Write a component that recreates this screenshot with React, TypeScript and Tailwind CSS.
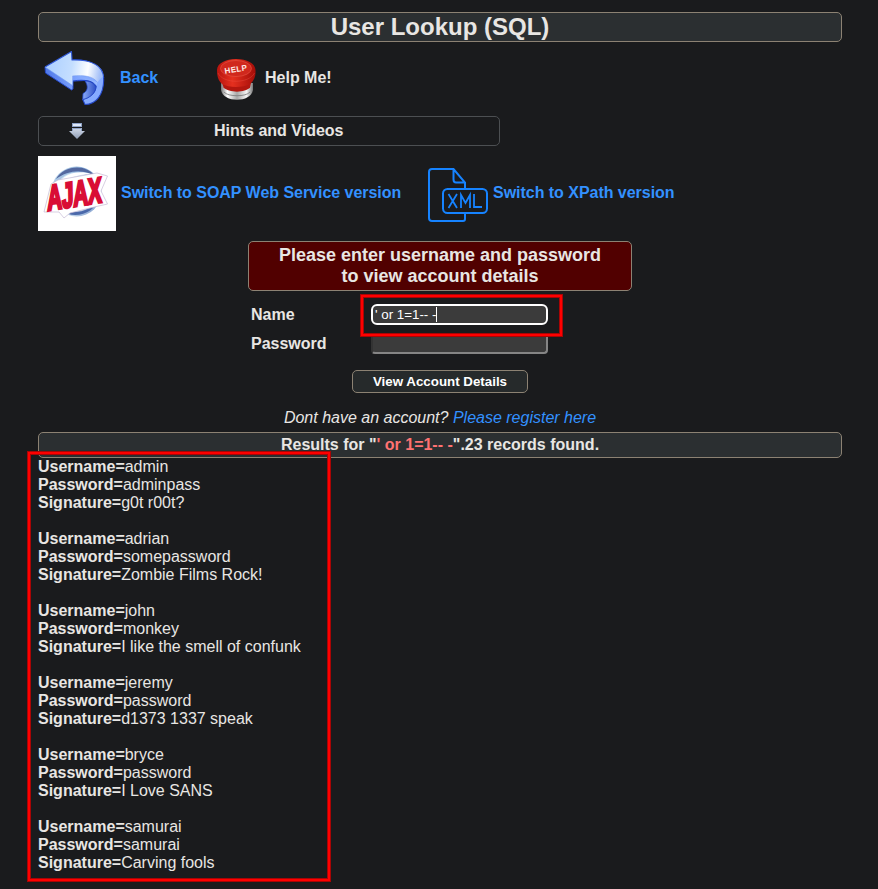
const records = [
  ["admin", "adminpass", "g0t r00t?"],
  ["adrian", "somepassword", "Zombie Films Rock!"],
  ["john", "monkey", "I like the smell of confunk"],
  ["jeremy", "password", "d1373 1337 speak"],
  ["bryce", "password", "I Love SANS"],
  ["samurai", "samurai", "Carving fools"],
];

function BackIcon() {
  return (
    <svg width="62" height="56" viewBox="44 51 62 56" className="shrink-0">
      <defs>
        <linearGradient id="face" x1="0" x2="1" y1="0" y2="0.1">
          <stop offset="0" stopColor="#a9cdff" />
          <stop offset="0.5" stopColor="#c4deff" />
          <stop offset="0.78" stopColor="#fdfeff" />
          <stop offset="1" stopColor="#a3bff8" />
        </linearGradient>
        <linearGradient id="side" x1="0" x2="1" y1="0" y2="0">
          <stop offset="0" stopColor="#4f78e8" />
          <stop offset="0.6" stopColor="#7ea4ff" />
          <stop offset="1" stopColor="#9bbcff" />
        </linearGradient>
        <linearGradient id="inner" x1="0" x2="1" y1="0" y2="0">
          <stop offset="0" stopColor="#8aabf8" />
          <stop offset="1" stopColor="#2f50c4" />
        </linearGradient>
      </defs>
      <path d="M72 60 C92 59 104 68 103.700 80 C103.500 95 96 104.500 85 104.500 L82.700 99.500 C90 98 96 92 96 86 C94 79 84 80 73 81Z" fill="#86abff" stroke="#2448c8" strokeWidth="1.1" />
      <path d="M83 93.500 C88 91 88.500 86 85 81 C91 80.500 96 83 96 87 C95.500 93 90 98 82.700 99.500Z" fill="url(#inner)" stroke="#2448c8" strokeWidth=".8" />
      <path d="M45 67 L45.500 73 L71.500 90 L73 89 L73 81 L84 80 C90 80 94 82 96.500 86 L97.500 82 L73 75Z" fill="url(#side)" />
      <path d="M45 67 L45.500 73 L71.500 90 L73 89 V81 C85 79 93 81 96 87" fill="none" stroke="#2448c8" strokeLinejoin="round" />
      <path d="M45 67 L71.500 51.500 L72 60 C92 59.500 103 66 103.500 76 C101 78 99 80 97.500 82.500 C93 76 84 75 73 76 L72.500 85.500Z" fill="url(#face)" />
      <path d="M45 67 L71.500 51.500 L72 60 C92 59.500 103 66 103.700 78" fill="none" stroke="#2f58d8" strokeWidth="1.1" strokeLinejoin="round" />
      <path d="M45 67 L72.500 85.500 V76 C84 75 93 76 97.500 82.500" fill="none" stroke="#6f97f0" strokeWidth=".6" />
    </svg>
  );
}

function HelpIcon() {
  return (
    <svg width="42" height="44" viewBox="216 58 42 44" className="shrink-0">
      <defs>
        <linearGradient id="chrome">
          <stop offset="0" stopColor="#777" />
          <stop offset=".2" stopColor="#fff" />
          <stop offset=".5" stopColor="#a8a8a8" />
          <stop offset=".8" stopColor="#f6f6f6" />
          <stop offset="1" stopColor="#777" />
        </linearGradient>
        <linearGradient id="red">
          <stop offset="0" stopColor="#b5140e" />
          <stop offset=".4" stopColor="#e5301f" />
          <stop offset="1" stopColor="#a50d08" />
        </linearGradient>
      </defs>
      <path d="M221 84 V91 C223 104 251 104 253 91 V84Z" fill="url(#chrome)" />
      <path d="M224 93 C228 98 246 98 250 93" fill="none" stroke="#777" strokeWidth=".8" />
      <path d="M221 80 L223.500 88.500 C229 94 245 94 250 88.500 L252 80Z" fill="#b3170f" />
      <path d="M217 71 C217 64 226 60 236 60 C247 60 255 64 255.500 71 C256 77 254 82 250 85 C243 89 229 89 222 85 C218 81 217 77 217 71Z" fill="url(#red)" />
      <path d="M218 74 C223 85 249 85 254.500 74" fill="none" stroke="#f0594a" strokeWidth="1" opacity=".35" />
      <ellipse cx="236" cy="69.500" rx="15.500" ry="8" fill="#d0281d" stroke="#e65546" strokeWidth=".6" />
      <text x="224.500" y="73" transform="rotate(-9 236 70)" className="fill-[#ffe9e4] font-['Liberation_Sans',sans-serif] text-[8px] font-bold" textLength="22.500">HELP</text>
    </svg>
  );
}

function DownIcon() {
  return (
    <svg width="18" height="18" viewBox="68 121 18 18" className="block">
      <defs>
        <linearGradient id="down" x1="0" x2="0" y1="0" y2="1">
          <stop offset="0" stopColor="#d3dbe9" />
          <stop offset="1" stopColor="#8e9cb4" />
        </linearGradient>
      </defs>
      <rect x="72.500" y="122.500" width="9" height="3" fill="#dfe8f8" stroke="#8ea2c6" />
      <path d="M72 127 H82 V130 H85 L77 138 L69 130 H72Z" fill="url(#down)" />
      <path d="M72.500 130 V127.500 H81.500 V130" fill="none" stroke="#8ea2c6" />
    </svg>
  );
}

function AjaxLogo() {
  return (
    <svg width="78" height="75" viewBox="38 156 78 75" className="shrink-0 overflow-visible bg-white">
      <defs>
        <linearGradient id="globe" x1="0" y1="0" x2="1" y2="1">
          <stop offset="0" stopColor="#d3e8f4" />
          <stop offset=".35" stopColor="#86abd8" />
          <stop offset=".6" stopColor="#d9e9f5" />
          <stop offset="1" stopColor="#6789c2" />
        </linearGradient>
      </defs>
      <circle cx="76.500" cy="191.500" r="25" fill="url(#globe)" />
      <ellipse cx="76" cy="192" rx="20.500" ry="19.500" fill="#cfe3f2" />
      <path d="M56 179 C63 166 86 162 97 178 C84 168 69 170 56 179Z" fill="#53689f" />
      <path d="M57 185 C65 172 80 170 91 174 C79 174 66 178 57 185Z" fill="#fff" />
      <path d="M60 210 C75 221 95 213 100 197 C91 211 78 215 60 210Z" fill="#4a68aa" />
      <path d="M44 212 L51 184 L58 180 L97 173 L107.500 176 L101 191 L107.500 204 L90 208 L70 213 L64 218 L59 212Z" fill="#fff" stroke="#c6bad6" strokeWidth=".7" />
      <text transform="translate(47.500 210.500) rotate(-9) skewX(-8)" textLength="55" lengthAdjust="spacingAndGlyphs" className="fill-[#d90d35] stroke-[#d90d35] stroke-[3px] font-['Liberation_Sans',sans-serif] text-[35px] font-bold">AJAX</text>
    </svg>
  );
}

function XmlIcon() {
  return (
    <svg width="61" height="55" viewBox="428 168 61 55" className="shrink-0" fill="none" stroke="#1683ff" strokeWidth="2">
      <path d="M465 188 V182.500 L453.500 169 H432 Q429 169 429 172 V218 Q429 221 432 221 H463 Q465 221 465 219 V214 M453.500 169 V179.500 Q453.500 182.500 456 182.500 H465" />
      <rect x="443" y="189" width="44" height="24" rx="4.500" />
      <path d="M448.500 194 L457 208 M457 194 L448.500 208 M461 208 V195 L465.500 203 L470 195 V208 M474 194 V207 H482" strokeWidth="1.8" />
    </svg>
  );
}

export default function App() {
  return (
    <main className="relative flex h-[889px] w-[878px] flex-col overflow-hidden bg-[#1a1b1d] px-[38px] pt-3 pr-9 font-['Liberation_Sans',Arial,sans-serif] text-[16px] leading-[18px] text-[#e8e6e3]">
      <h1 className="flex h-[30px] w-[804px] shrink-0 items-center justify-center rounded-[5px] border border-[#8c8273] bg-[#2b2f31] text-2xl font-bold">User Lookup (SQL)</h1>

      <nav className="flex h-[74px] shrink-0 items-center pl-1.5 font-bold">
        <BackIcon />
        <a className="ml-3.5 w-24 pb-0.5 text-[#3391ff]">Back</a>
        <HelpIcon />
        <span className="ml-[7px] pb-0.5">Help Me!</span>
      </nav>

      <div className="flex h-[30px] w-[462px] shrink-0 items-center rounded-[5px] border border-[#4c4f52] pl-[29px] font-bold">
        <DownIcon />
        <span className="ml-32">Hints and Videos</span>
      </div>

      <div className="mt-2.5 flex h-[75px] shrink-0 items-center font-bold text-[#3391ff]">
        <AjaxLogo />
        <a className="ml-[5px] w-[307px] pb-0.5 tracking-[-0.03px]">Switch to SOAP Web Service version</a>
        <div className="pt-1"><XmlIcon /></div>
        <a className="ml-1 pb-0.5 tracking-[-0.03px]">Switch to XPath version</a>
      </div>

      <form className="mt-2.5 ml-[210px] flex w-[384px] shrink-0 flex-col">
        <div className="flex h-[50px] items-center justify-center rounded-[5px] border border-[#8c8273] bg-[#510000] text-center text-[18px] leading-[21px] font-bold">
          Please enter username and password<br />to view account details
        </div>
        <label className="mt-[13px] flex h-[21px] items-center pl-[3px] font-bold">
          <span className="w-[120px]">Name</span>
          <span className="flex h-[21px] w-[177px] items-center rounded-[6px] border-2 border-white bg-[#3b3b3b] pl-0.5 text-[13.333px] font-normal whitespace-pre text-white">
            ' or 1=1-- -<span className="h-[15px] w-px bg-white" />
          </span>
        </label>
        <label className="mt-2 flex h-[21px] items-center pl-[3px] font-bold">
          <span className="w-[120px]">Password</span>
          <span className="h-[21px] w-[177px] rounded-[4px] border-2 border-t-[#333] border-r-[#858585] border-b-[#858585] border-l-[#333] bg-[#3b3b3b]" />
        </label>
        <button type="button" className="mt-4 ml-[104px] flex h-[23px] w-[176px] items-center justify-center rounded-[5px] border border-[#8c8273] bg-[#262a2b] text-[13.333px] font-bold text-white">View Account Details</button>
      </form>

      <p className="mt-4 h-[18px] w-[804px] shrink-0 text-center italic">
        Dont have an account? <a className="text-[#3391ff]">Please register here</a>
      </p>
      <div className="mt-[5px] flex h-[26px] w-[804px] shrink-0 items-center justify-center rounded-[5px] border border-[#8c8273] bg-[#2b2f31] font-bold">
        <span>Results for "<span className="text-[#ff7272]">' or 1=1-- -</span>".23 records found.</span>
      </div>

      <section className="flex flex-col gap-[18px]">
        {records.map(([user, password, signature]) => (
          <div key={user}>
            <p><b>Username=</b>{user}</p>
            <p><b>Password=</b>{password}</p>
            <p><b>Signature=</b>{signature}</p>
          </div>
        ))}
      </section>

      <div className="absolute top-[294px] left-[360px] h-[43px] w-[203px] border border-[#a80505]">
        <div className="h-full border-2 border-[#ff0000]"><div className="h-full border border-[#a80505]" /></div>
      </div>
      <div className="absolute top-[451px] left-[27px] h-[431px] w-[304px] border border-[#a80505]">
        <div className="h-full border-2 border-[#ff0000]"><div className="h-full border border-[#a80505]" /></div>
      </div>
    </main>
  );
}
